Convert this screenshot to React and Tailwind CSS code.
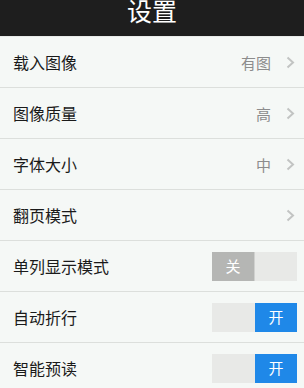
import React from "react";

const font = { fontFamily: '"Noto Sans CJK SC", "Noto Sans", sans-serif' };

function Chevron() {
  return (
    <svg width="9" height="13" viewBox="0 0 9 13" className="ml-[15px] shrink-0">
      <path d="M1.5 1.5 L7 6.5 L1.5 11.5" fill="none" stroke="#c2c4c3" strokeWidth="2" />
    </svg>
  );
}

function NavRow({ label, value }) {
  return (
    <div className="flex h-[51px] items-center border-b border-[#dcdfdc] pl-[13px] pr-[9px]">
      <span className="flex-1 text-[16px] leading-none text-[#1a1a1a]">{label}</span>
      {value && <span className="text-[15px] leading-none text-[#8c8c8c]">{value}</span>}
      <Chevron />
    </div>
  );
}

function ToggleRow({ label, on }) {
  return (
    <div className="flex h-[51px] items-center border-b border-[#dcdfdc] pl-[13px] pr-[7px]">
      <span className="flex-1 text-[16px] leading-none text-[#1a1a1a]">{label}</span>
      <div className="flex h-[29px] w-[85px]">
        {on ? (
          <>
            <div className="w-[43px] bg-[#e8e9e7]" />
            <div className="flex w-[42px] items-center justify-center bg-[#1f88e8] text-[15px] text-white">开</div>
          </>
        ) : (
          <>
            <div className="flex w-[42px] items-center justify-center bg-[#b5b6b4] text-[15px] text-white">关</div>
            <div className="w-[43px] border-l border-[#d0d1cf] bg-[#e8e9e7]" />
          </>
        )}
      </div>
    </div>
  );
}

export default function App() {
  return (
    <div className="h-[388px] w-[304px] overflow-hidden bg-[#f5f8f6]" style={font}>
      <div className="flex h-[37px] justify-center overflow-hidden border-b border-[#e8ebe9] bg-[#1e1e1e]">
        <span className="mt-[-3px] text-[25px] leading-[27px] text-white">设置</span>
      </div>
      <NavRow label="载入图像" value="有图" />
      <NavRow label="图像质量" value="高" />
      <NavRow label="字体大小" value="中" />
      <NavRow label="翻页模式" />
      <ToggleRow label="单列显示模式" on={false} />
      <ToggleRow label="自动折行" on={true} />
      <ToggleRow label="智能预读" on={true} />
    </div>
  );
}
